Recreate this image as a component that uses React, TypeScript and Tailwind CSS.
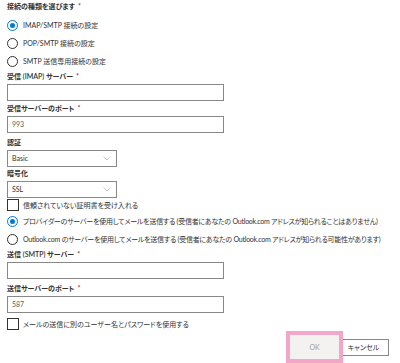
import React from 'react';

const font = "[font-family:'Lato','Noto_Sans_CJK_JP',sans-serif] [font-feature-settings:'palt']";

const Radio = ({ checked, label, tight }: { checked?: boolean; label: string; tight?: boolean }) => (
  <div className="flex h-[18px] items-center gap-[5px]">
    {checked ? (
      <span className="flex h-[11px] w-[11px] shrink-0 items-center justify-center rounded-full border border-[#0078d4] bg-white">
        <span className="h-[5px] w-[5px] rounded-full bg-[#0078d4]" />
      </span>
    ) : (
      <span className="h-[11px] w-[11px] shrink-0 rounded-full border border-[#323130] bg-white" />
    )}
    <span className={`whitespace-nowrap ${tight ? 'tracking-[-0.25px]' : ''}`}>{label}</span>
  </div>
);

const Label = ({ text, required }: { text: string; required?: boolean }) => (
  <div className="flex h-[13px] items-center font-semibold">
    {text}
    {required && <span className="ml-[3px] text-[#a4262c]">*</span>}
  </div>
);

const Input = ({ value }: { value?: string }) => (
  <div className="mt-[1px] flex h-[17px] w-[217px] items-center border border-[#8a8886] bg-white px-[4px] text-[#605e5c]">
    {value}
  </div>
);

const Select = ({ value }: { value: string }) => (
  <div className="mt-[1px] flex h-[17px] w-[110px] items-center justify-between border border-[#8a8886] bg-white pl-[4px] pr-[5px] text-[#323130]">
    <span>{value}</span>
    <svg width="8" height="5" viewBox="0 0 8 5" fill="none">
      <path d="M0.5 0.5 L4 4 L7.5 0.5" stroke="#b3b0ad" strokeWidth="0.7" />
    </svg>
  </div>
);

const Checkbox = ({ label }: { label: string }) => (
  <div className="flex h-[12px] items-center gap-[4px]">
    <span className="h-[12px] w-[12px] shrink-0 border border-[#323130] bg-white" />
    <span className="whitespace-nowrap">{label}</span>
  </div>
);

export default function App() {
  return (
    <div className={`h-[363px] w-[400px] overflow-hidden bg-white pl-[7px] text-[7px] leading-none text-[#323130] ${font}`}>
      <div className="flex h-[13px] items-center font-semibold">
        接続の種類を選びます<span className="ml-[3px] text-[#a4262c]">*</span>
      </div>
      <div className="mt-[3px]">
        <Radio checked label="IMAP/SMTP 接続の設定" />
        <Radio label="POP/SMTP 接続の設定" />
        <Radio label="SMTP 送信専用接続の設定" />
      </div>

      <Label text="受信 (IMAP) サーバー" required />
      <Input />
      <div className="mt-[1px]">
        <Label text="受信サーバーのポート" required />
      </div>
      <Input value="993" />

      <div className="mt-[3px]">
        <Label text="認証" />
      </div>
      <Select value="Basic" />
      <Label text="暗号化" />
      <Select value="SSL" />
      <div className="mt-[1px]">
        <Checkbox label="信頼されていない証明書を受け入れる" />
      </div>

      <div className="mt-[1px]">
        <Radio tight checked label="プロバイダーのサーバーを使用してメールを送信する (受信者にあなたの Outlook.com アドレスが知られることはありません)" />
        <Radio tight label="Outlook.com のサーバーを使用してメールを送信する (受信者にあなたの Outlook.com アドレスが知られる可能性があります)" />
      </div>

      <Label text="送信 (SMTP) サーバー" required />
      <Input />
      <div className="mt-[3px]">
        <Label text="送信サーバーのポート" required />
      </div>
      <Input value="587" />

      <div className="mt-[5px]">
        <Checkbox label="メールの送信に別のユーザー名とパスワードを使用する" />
      </div>

      <div className="mt-[1px] flex items-center pl-[279px]">
        <div className="relative z-10 border-[4px] border-[#f2a7c9]">
          <div className="flex h-[24px] w-[49px] items-center justify-center bg-[#f3f2f1] text-[#a19f9d]">
            OK
          </div>
        </div>
        <div className="-ml-[5px] flex h-[17px] w-[51px] items-center justify-center border border-[#8a8886] bg-white">
          キャンセル
        </div>
      </div>
    </div>
  );
}
